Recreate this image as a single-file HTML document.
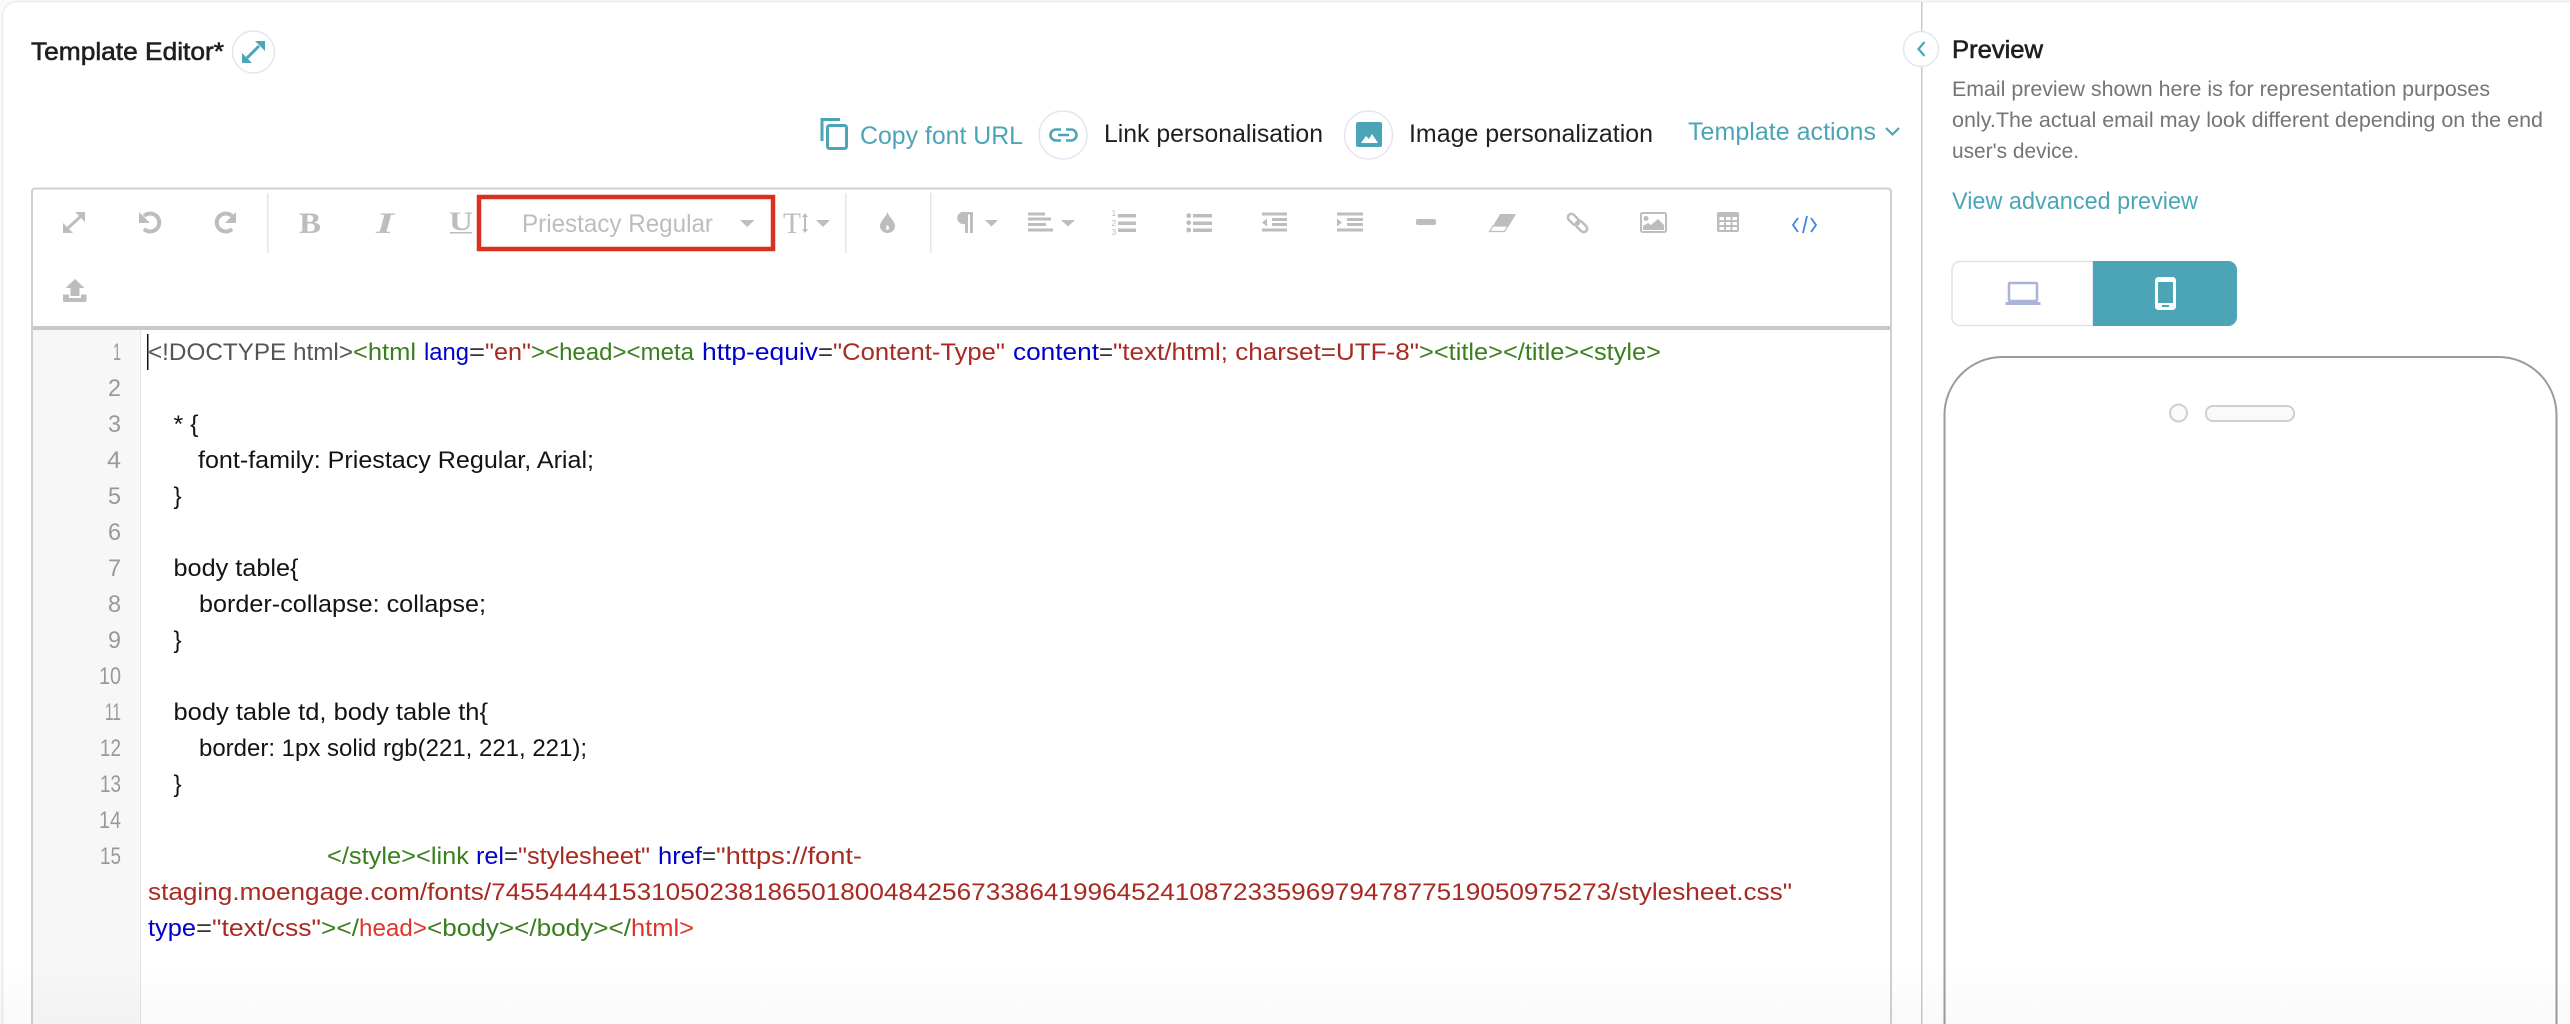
<!DOCTYPE html>
<html lang="en"><head><meta charset="utf-8"><title>Template Editor</title>
<style>
html,body{margin:0;padding:0;background:#fafafa;width:2570px;height:1024px;overflow:hidden}
svg{display:block}
text{font-family:"Liberation Sans",Arial,sans-serif;white-space:pre}
.c{font-size:24px}
.n{font-size:24px;fill:#999}
.k{fill:#141414}.g{fill:#3a7f1e}.b{fill:#0000cc}.r{fill:#a82a22}.d{fill:#555}.e{fill:#333}.h{fill:#e0352b}
.tb{fill:#bdbdbd}
</style></head><body>
<svg xmlns="http://www.w3.org/2000/svg" width="2570" height="1024" viewBox="0 0 2570 1024">
<defs><linearGradient id="fade" x1="0" y1="0" x2="0" y2="1"><stop offset="0" stop-color="#000" stop-opacity="0"/><stop offset="1" stop-color="#000" stop-opacity=".022"/></linearGradient></defs>
<path d="M2.500 1024V15.500a14 14 0 0 1 14-14H2570V1024z" fill="#fff"/>
<path d="M2.500 1024V15.500a14 14 0 0 1 14-14H2570" fill="none" stroke="#efefef" stroke-width="2"/>

<!-- header -->
<text x="31" y="60" font-size="25" fill="#1f1f1f" stroke="#1f1f1f" stroke-width=".6" textLength="193" lengthAdjust="spacingAndGlyphs">Template Editor*</text>
<circle cx="253.500" cy="52" r="21" fill="#fff" stroke="#e3e6f2" stroke-width="1.500"/>
<g fill="#4ca5b7"><path d="M247 58L259 46" stroke="#4ca5b7" stroke-width="3"/><path d="M265 41v10l-10-10zM242 63V53l10 10z"/></g>

<!-- actions -->
<path d="M822 141V119.500H840" fill="none" stroke="#4ca5b7" stroke-width="3"/>
<rect x="827.500" y="125.500" width="19" height="23" rx="2" fill="none" stroke="#4ca5b7" stroke-width="3"/>
<text x="860" y="144" font-size="25" fill="#4ca5b7" textLength="163" lengthAdjust="spacingAndGlyphs">Copy font URL</text>
<circle cx="1063" cy="135" r="24" fill="#fff" stroke="#e3e6f2" stroke-width="1.500"/>
<path d="M1061 129.500h-5a5.500 5.500 0 0 0 0 11h5M1066 129.500h5a5.500 5.500 0 0 1 0 11h-5M1058 135h11" fill="none" stroke="#4ca5b7" stroke-width="2.600"/>
<text x="1104" y="142" font-size="25" fill="#1f1f1f" textLength="219" lengthAdjust="spacingAndGlyphs">Link personalisation</text>
<circle cx="1368.500" cy="135" r="24" fill="#fff" stroke="#e3e6f2" stroke-width="1.500"/>
<rect x="1356" y="122" width="26" height="25" rx="2" fill="#4ca5b7"/>
<path d="M1361 143l5-7 3 3 3-5 6 9z" fill="#fff"/>
<text x="1409" y="142" font-size="25" fill="#1f1f1f" textLength="244" lengthAdjust="spacingAndGlyphs">Image personalization</text>
<text x="1688" y="140" font-size="25" fill="#4ca5b7" textLength="188" lengthAdjust="spacingAndGlyphs">Template actions</text>
<path d="M1886 128l6.500 6.500 6.500-6.500" fill="none" stroke="#4ca5b7" stroke-width="2.200"/>

<!-- editor frame -->
<path d="M32 1026V191.500a3 3 0 0 1 3-3H1888a3 3 0 0 1 3 3V1026" fill="#fff" stroke="#d0d0d0" stroke-width="2"/>
<rect x="33" y="330" width="107" height="694" fill="#f7f7f7"/>
<rect x="140" y="330" width="1" height="694" fill="#e6e6e6"/>
<rect x="33" y="326" width="1857" height="4" fill="#c8c8c8"/>

<!-- toolbar -->
<g fill="#e6e6e6"><rect x="267" y="193" width="1.500" height="60"/><rect x="845" y="193" width="1.500" height="60"/><rect x="930" y="193" width="1.500" height="60"/></g>
<g class="tb">
<path d="M68 228L80 217" stroke="#bdbdbd" stroke-width="3"/><path d="M85 212v10l-10-10zM63 233v-10l10 10z"/>
<path d="M144 216A9 9 0 1 1 144 229" fill="none" stroke="#bdbdbd" stroke-width="4"/><path d="M139 212v11h11z"/>
<path d="M232 216A9 9 0 1 0 232 229" fill="none" stroke="#bdbdbd" stroke-width="4"/><path d="M236 212v11h-11z"/>
<text x="299" y="233" font-size="30" font-weight="700" style="font-family:'Liberation Serif',serif" textLength="22" lengthAdjust="spacingAndGlyphs">B</text>
<text x="376" y="233" font-size="30" font-style="italic" font-weight="700" style="font-family:'Liberation Serif',serif" textLength="18" lengthAdjust="spacingAndGlyphs">I</text>
<text x="449" y="230" font-size="26" font-weight="700" style="font-family:'Liberation Serif',serif" textLength="24" lengthAdjust="spacingAndGlyphs">U</text>
<rect x="450" y="232" width="22" height="1.500"/>
<text x="522" y="232" font-size="25" textLength="191" lengthAdjust="spacingAndGlyphs">Priestacy Regular</text>
<path d="M740 220h14.500l-7.250 7z"/>
<text x="783" y="233" font-size="30" style="font-family:'Liberation Serif',serif" textLength="18" lengthAdjust="spacingAndGlyphs">T</text>
<path d="M805 213l3 4h-2v12h2l-3 4-3-4h2v-12h-2z"/>
<path d="M816 220h14l-7 7z"/>
<path d="M887.500 212c-2 6-7.500 9-7.500 14a7.500 7 0 0 0 15 0c0-5-5.500-8-7.500-14zM887.500 225c1 1 1.500 2 1.500 3a1.500 2 0 0 1-3 0c0-1 .5-2 1.500-3z" fill-rule="evenodd"/>
<path d="M965 224a6.200 6.200 0 1 1 0-12h8v21h-3v-18.500h-2v18.500h-3z"/>
<path d="M985 220h13l-6.500 6.500z"/>
<rect x="1028" y="212.500" width="17" height="3"/><rect x="1028" y="217.500" width="23" height="3"/><rect x="1028" y="223" width="18" height="3"/><rect x="1028" y="228.500" width="25" height="3"/>
<path d="M1061 220h14l-7 6.500z"/>
<text x="1111.500" y="216" font-size="8.500">1</text><text x="1111.500" y="226" font-size="8.500">2</text><text x="1111.500" y="235" font-size="8.500">3</text>
<rect x="1118" y="214" width="18" height="3.500"/><rect x="1118" y="221.500" width="18" height="3.500"/><rect x="1118" y="228.500" width="18" height="3.500"/>
<circle cx="1188.700" cy="215.700" r="2.400"/><circle cx="1188.700" cy="222.700" r="2.400"/><circle cx="1188.700" cy="230" r="2.400"/>
<rect x="1193" y="214" width="19" height="3.500"/><rect x="1193" y="221.500" width="19" height="3.500"/><rect x="1193" y="228.500" width="19" height="3.500"/>
<rect x="1262" y="212.500" width="25" height="3"/><rect x="1272" y="218" width="15" height="3"/><rect x="1272" y="223" width="15" height="3"/><rect x="1262" y="228.500" width="25" height="3"/><path d="M1267 218.500v8l-5-4z"/>
<rect x="1337" y="212.500" width="26" height="3"/><rect x="1347" y="218" width="16" height="3"/><rect x="1347" y="223" width="16" height="3"/><rect x="1337" y="228.500" width="26" height="3"/><path d="M1337 218.500v8l5-4z"/>
<rect x="1416" y="219" width="20" height="6" rx="2"/>
<path d="M1500 214h16l-7 12h-16z"/><path d="M1493 226h15l-3.500 5.500h-15z" fill="#fff" stroke="#bdbdbd" stroke-width="1.200"/>
<g fill="none" stroke="#bdbdbd" stroke-width="2.500"><rect x="1567" y="216" width="13" height="7" rx="3.500" transform="rotate(45 1573.500 219.500)"/><rect x="1575" y="223" width="13" height="7" rx="3.500" transform="rotate(45 1581.500 226.500)"/></g>
<rect x="1641" y="213" width="25" height="19" rx="1.500" fill="none" stroke="#bdbdbd" stroke-width="2"/>
<circle cx="1646" cy="218.500" r="2.500"/><path d="M1643 230v-4l5-3 3 2 7-6 6 6v5z"/>
<path d="M1719 212h18a2 2 0 0 1 2 2v16a2 2 0 0 1-2 2h-18a2 2 0 0 1-2-2v-16a2 2 0 0 1 2-2zM1719.500 217v3h4.500v-3zM1726 217v3h4.500v-3zM1732.500 217v3h4.500v-3zM1719.500 222v3h4.500v-3zM1726 222v3h4.500v-3zM1732.500 222v3h4.500v-3zM1719.500 227v3h4.500v-3zM1726 227v3h4.500v-3zM1732.500 227v3h4.500v-3z" fill-rule="evenodd"/>
<path d="M75 279l9.500 9h-5v8h-9v-8h-5z"/>
<path d="M63 294.500h6v3.500h12v-3.500h4.500a1 1 0 0 1 1 1v5.500a1 1 0 0 1-1 1H64a1 1 0 0 1-1-1z"/>
</g>
<path d="M1798 218l-5 7 5 7M1811 218l5 7-5 7M1807 216l-4 17" fill="none" stroke="#3d85e0" stroke-width="1.800"/>

<!-- red highlight -->
<rect x="479" y="197" width="294" height="52" fill="none" stroke="#d9301f" stroke-width="4.500"/>

<!-- gutter numbers -->
<text class="n" x="113" y="360" textLength="8" lengthAdjust="spacingAndGlyphs">1</text>
<text class="n" x="108" y="396" textLength="13" lengthAdjust="spacingAndGlyphs">2</text>
<text class="n" x="108" y="432" textLength="13" lengthAdjust="spacingAndGlyphs">3</text>
<text class="n" x="107" y="468" textLength="14" lengthAdjust="spacingAndGlyphs">4</text>
<text class="n" x="108" y="504" textLength="13" lengthAdjust="spacingAndGlyphs">5</text>
<text class="n" x="108" y="540" textLength="13" lengthAdjust="spacingAndGlyphs">6</text>
<text class="n" x="108" y="576" textLength="13" lengthAdjust="spacingAndGlyphs">7</text>
<text class="n" x="108" y="612" textLength="13" lengthAdjust="spacingAndGlyphs">8</text>
<text class="n" x="108" y="648" textLength="13" lengthAdjust="spacingAndGlyphs">9</text>
<text class="n" x="99" y="684" textLength="22" lengthAdjust="spacingAndGlyphs">10</text>
<text class="n" x="105" y="720" textLength="16" lengthAdjust="spacingAndGlyphs">11</text>
<text class="n" x="100" y="756" textLength="21" lengthAdjust="spacingAndGlyphs">12</text>
<text class="n" x="100" y="792" textLength="21" lengthAdjust="spacingAndGlyphs">13</text>
<text class="n" x="99" y="828" textLength="22" lengthAdjust="spacingAndGlyphs">14</text>
<text class="n" x="100" y="864" textLength="21" lengthAdjust="spacingAndGlyphs">15</text>

<!-- caret -->
<rect x="147" y="334" width="1.500" height="36" fill="#111"/>

<!-- code -->
<g class="c">
<text class="d" x="148" y="360" textLength="205" lengthAdjust="spacingAndGlyphs">&lt;!DOCTYPE html&gt;</text>
<text class="g" x="353" y="360" textLength="63" lengthAdjust="spacingAndGlyphs">&lt;html</text>
<text class="b" x="424" y="360" textLength="45" lengthAdjust="spacingAndGlyphs">lang</text>
<text class="e" x="469" y="360" textLength="16" lengthAdjust="spacingAndGlyphs">=</text>
<text class="r" x="485" y="360" textLength="46" lengthAdjust="spacingAndGlyphs">"en"</text>
<text class="g" x="531" y="360" textLength="163" lengthAdjust="spacingAndGlyphs">&gt;&lt;head&gt;&lt;meta</text>
<text class="b" x="702" y="360" textLength="116" lengthAdjust="spacingAndGlyphs">http-equiv</text>
<text class="e" x="818" y="360" textLength="15" lengthAdjust="spacingAndGlyphs">=</text>
<text class="r" x="833" y="360" textLength="172" lengthAdjust="spacingAndGlyphs">"Content-Type"</text>
<text class="b" x="1013" y="360" textLength="86" lengthAdjust="spacingAndGlyphs">content</text>
<text class="e" x="1099" y="360" textLength="14" lengthAdjust="spacingAndGlyphs">=</text>
<text class="r" x="1113" y="360" textLength="306" lengthAdjust="spacingAndGlyphs">"text/html; charset=UTF-8"</text>
<text class="g" x="1419" y="360" textLength="242" lengthAdjust="spacingAndGlyphs">&gt;&lt;title&gt;&lt;/title&gt;&lt;style&gt;</text>

<text class="k" x="173.500" y="432" textLength="25" lengthAdjust="spacingAndGlyphs">* {</text>
<text class="k" x="198" y="468" textLength="396" lengthAdjust="spacingAndGlyphs">font-family: Priestacy Regular, Arial;</text>
<text class="k" x="173.500" y="504">}</text>
<text class="k" x="173.500" y="576" textLength="125" lengthAdjust="spacingAndGlyphs">body table{</text>
<text class="k" x="199" y="612" textLength="287" lengthAdjust="spacingAndGlyphs">border-collapse: collapse;</text>
<text class="k" x="173.500" y="648">}</text>
<text class="k" x="173.500" y="720" textLength="314.500" lengthAdjust="spacingAndGlyphs">body table td, body table th{</text>
<text class="k" x="199" y="756" textLength="388" lengthAdjust="spacingAndGlyphs">border: 1px solid rgb(221, 221, 221);</text>
<text class="k" x="173.500" y="792">}</text>

<text class="g" x="327" y="864" textLength="142" lengthAdjust="spacingAndGlyphs">&lt;/style&gt;&lt;link</text>
<text class="b" x="476" y="864" textLength="28" lengthAdjust="spacingAndGlyphs">rel</text>
<text class="e" x="504" y="864" textLength="14" lengthAdjust="spacingAndGlyphs">=</text>
<text class="r" x="518" y="864" textLength="132" lengthAdjust="spacingAndGlyphs">"stylesheet"</text>
<text class="b" x="658" y="864" textLength="44" lengthAdjust="spacingAndGlyphs">href</text>
<text class="e" x="702" y="864" textLength="14" lengthAdjust="spacingAndGlyphs">=</text>
<text class="r" x="716" y="864" textLength="146" lengthAdjust="spacingAndGlyphs">"https://font-</text>
<text class="r" x="148" y="900" textLength="1644" lengthAdjust="spacingAndGlyphs">staging.moengage.com/fonts/74554444153105023818650180048425673386419964524108723359697947877519050975273/stylesheet.css"</text>
<text class="b" x="148" y="936" textLength="48" lengthAdjust="spacingAndGlyphs">type</text>
<text class="e" x="196" y="936" textLength="16" lengthAdjust="spacingAndGlyphs">=</text>
<text class="r" x="212" y="936" textLength="109" lengthAdjust="spacingAndGlyphs">"text/css"</text>
<text class="g" x="321" y="936" textLength="38" lengthAdjust="spacingAndGlyphs">&gt;&lt;/</text>
<text class="h" x="359" y="936" textLength="68" lengthAdjust="spacingAndGlyphs">head&gt;</text>
<text class="g" x="427" y="936" textLength="204" lengthAdjust="spacingAndGlyphs">&lt;body&gt;&lt;/body&gt;&lt;/</text>
<text class="h" x="631" y="936" textLength="63" lengthAdjust="spacingAndGlyphs">html&gt;</text>
</g>

<!-- preview panel -->
<rect x="1921" y="2" width="1.500" height="1022" fill="#c9c9c9"/>
<circle cx="1921" cy="49" r="17.500" fill="#fff" stroke="#e3e6f2" stroke-width="1.500"/>
<path d="M1924.500 42l-6 7 6 7" fill="none" stroke="#4ca5b7" stroke-width="2.200"/>
<text x="1952" y="58" font-size="25" fill="#1f1f1f" stroke="#1f1f1f" stroke-width=".6" textLength="91" lengthAdjust="spacingAndGlyphs">Preview</text>
<text x="1952" y="96" font-size="21" fill="#757575" textLength="538" lengthAdjust="spacingAndGlyphs">Email preview shown here is for representation purposes</text>
<text x="1952" y="127" font-size="21" fill="#757575" textLength="591" lengthAdjust="spacingAndGlyphs">only.The actual email may look different depending on the end</text>
<text x="1952" y="158" font-size="21" fill="#757575" textLength="127" lengthAdjust="spacingAndGlyphs">user's device.</text>
<text x="1952" y="209" font-size="24" fill="#4ca5b7" textLength="246" lengthAdjust="spacingAndGlyphs">View advanced preview</text>

<path d="M2093 261.500H1960a8 8 0 0 0-8 8v48a8 8 0 0 0 8 8h133z" fill="#fff" stroke="#dfe2ee" stroke-width="1.500"/>
<path d="M2093 261h135a9 9 0 0 1 9 9v47a9 9 0 0 1-9 9h-135z" fill="#4ca5b7"/>
<rect x="2009" y="283" width="28" height="18" rx="1" fill="none" stroke="#a9b4d6" stroke-width="2.500"/>
<rect x="2005.500" y="302" width="35" height="3" fill="#a9b4d6"/>
<rect x="2155" y="277" width="21" height="33" rx="3.500" fill="#fff"/>
<rect x="2158" y="282" width="15" height="21" fill="#4ca5b7"/>
<rect x="2162" y="305" width="7" height="2" fill="#4ca5b7"/>

<path d="M1944.500 1026V415a58 58 0 0 1 58-58h496a58 58 0 0 1 58 58v611" fill="#fff" stroke="#9b9b9b" stroke-width="2"/>
<circle cx="2178.500" cy="413" r="8.500" fill="#fafafa" stroke="#cfcfcf" stroke-width="2"/>
<rect x="2206" y="406" width="88" height="15" rx="7" fill="#fafafa" stroke="#cfcfcf" stroke-width="2"/>

<rect x="0" y="960" width="2570" height="64" fill="url(#fade)"/>
</svg>
</body></html>
